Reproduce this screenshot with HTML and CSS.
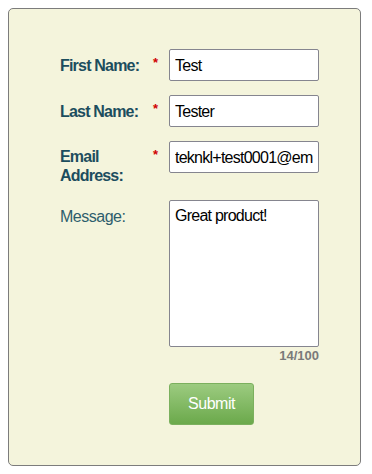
FILE: index.html
```html
<!DOCTYPE html>
<html lang="en">
<head>
    <meta charset="UTF-8">
    <meta name="viewport" content="width=device-width, initial-scale=1.0">
    <title>Contact Form</title>
    <link rel="stylesheet" href="styles.css">
</head>
<body>
    <form class="contact-form">
        <div class="row">
            <label class="label" for="firstName">First Name:</label>
            <span class="req">*</span>
            <input class="field" id="firstName" type="text" value="Test">
        </div>
        <div class="row">
            <label class="label" for="lastName">Last Name:</label>
            <span class="req">*</span>
            <input class="field" id="lastName" type="text" value="Tester">
        </div>
        <div class="row row-email">
            <label class="label" for="email">Email Address:</label>
            <span class="req">*</span>
            <input class="field" id="email" type="text" value="teknkl+test0001@em">
        </div>
        <div class="row">
            <label class="label label-light" for="message">Message:</label>
            <span class="req"></span>
            <div class="message-wrap">
                <textarea class="field area" id="message">Great product!</textarea>
                <div class="counter">14/100</div>
            </div>
        </div>
        <div class="row">
            <span></span>
            <span></span>
            <button type="button" class="submit">Submit</button>
        </div>
    </form>
</body>
</html>
```
FILE: styles.css
```css
* {
    box-sizing: border-box;
}

body {
    margin: 8px;
    background: #fff;
    font-family: "Liberation Sans", Arial, sans-serif;
}

.contact-form {
    width: 353px;
    height: 458px;
    background: #f4f4dc;
    border: 1px solid #7c7c7c;
    border-radius: 5px;
    padding: 40px 0 0 51px;
}

.row {
    display: grid;
    grid-template-columns: 91px 18px 150px;
    margin-bottom: 14px;
}

.label {
    color: #1c4d5e;
    font-weight: bold;
    font-size: 16px;
    letter-spacing: -0.8px;
    line-height: 19px;
    padding-top: 7px;
    white-space: nowrap;
}

.label-light {
    font-weight: normal;
    letter-spacing: -0.5px;
    color: #2d5d6c;
}

.row-email {
    margin-bottom: 15px;
}

.row-email .label {
    white-space: normal;
    width: 60px;
    padding-top: 6px;
}

.req {
    color: #d00000;
    font-weight: bold;
    font-size: 13px;
    padding-top: 6px;
    padding-left: 2px;
}

.field {
    width: 150px;
    height: 32px;
    margin: 0;
    border: 1px solid #85858f;
    border-radius: 2px;
    background: #fff;
    font-family: "Liberation Sans", Arial, sans-serif;
    font-size: 16px;
    letter-spacing: -0.75px;
    color: #000;
    padding: 2px 4px 0 5px;
}

.area {
    height: 147px;
    resize: none;
    padding-top: 4px;
    line-height: 22px;
    display: block;
}

.counter {
    text-align: right;
    font-weight: bold;
    font-size: 13px;
    color: #7a7a7a;
    margin-top: 1px;
    margin-bottom: 6px;
}

.submit {
    display: block;
    width: 85px;
    height: 42px;
    border: 1px solid #7bb05e;
    border-radius: 3px;
    background: linear-gradient(#9ccb80, #6ba94b);
    color: #fff;
    font-family: "Liberation Sans", Arial, sans-serif;
    font-size: 16px;
    letter-spacing: -0.5px;
    padding: 0;
}
```
